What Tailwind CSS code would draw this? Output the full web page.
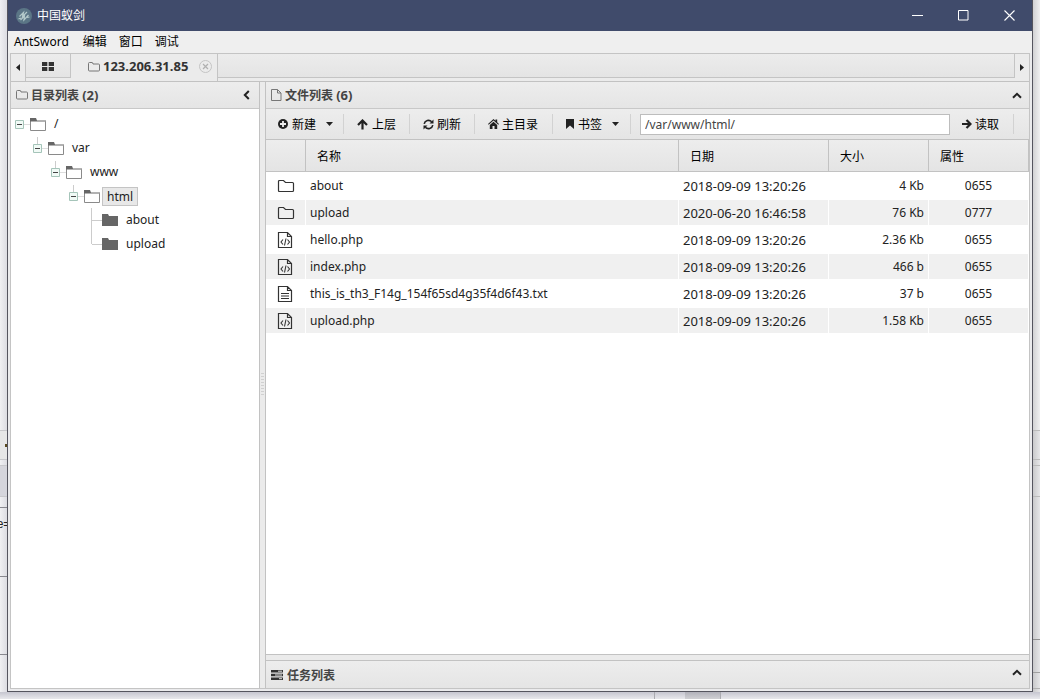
<!DOCTYPE html>
<html lang="zh-CN">
<head>
<meta charset="utf-8">
<title>中国蚁剑</title>
<script src="https://cdn.jsdelivr.net/npm/@tailwindcss/browser@4"></script>
</head>
<body class="h-screen overflow-hidden bg-[#e6e6ea] flex flex-col font-['Noto_Sans','Noto_Sans_CJK_SC',sans-serif] text-xs text-[#222]">
<svg class="hidden">
  <symbol id="folder-line" viewBox="0 0 18 14"><path d="M1.500 2.500q0-1 1-1h4l2 2h7q1 0 1 1v7q0 1-1 1h-13q-1 0-1-1z" fill="none" stroke="#333" stroke-width="1.200"/></symbol>
  <symbol id="folder-small" viewBox="0 0 12 10"><path d="M.5 1.500q0-1 1-1h2.500q1 0 1 1.500h5.500q1 0 1 1v5q0 1-1 1h-9q-1 0-1-1z" fill="none" stroke="#777"/></symbol>
  <symbol id="folder-open" viewBox="0 0 16 13"><path d="M.5 1.500v11h15v-9" fill="none" stroke="#8a8a8a"/><path d="M0 0h6l1 2.500h9v1h-16z" fill="#666"/></symbol>
  <symbol id="folder-full" viewBox="0 0 16 12"><path d="M0 0h6l1 2h9v10h-16z" fill="#666"/></symbol>
  <symbol id="file-code" viewBox="0 0 16 18"><path d="M1.500 1.500h9l4 4v11h-13zM10.500 1.500v4h4" fill="none" stroke="#333" stroke-width="1.200"/><path d="M6 8.500l-2 2.500 2 2.500M10.500 8.500l2 2.500-2 2.500M9 7.500l-1.500 7" fill="none" stroke="#333" stroke-width="1.100"/></symbol>
  <symbol id="file-text" viewBox="0 0 16 18"><path d="M1.500 1.500h9l4 4v11h-13zM10.500 1.500v4h4M4 8.500h8M4 11h8M4 13.500h8" fill="none" stroke="#333" stroke-width="1.200"/></symbol>
  <symbol id="minus-box" viewBox="0 0 9 9"><path d="M.5.5h8v8h-8z" fill="#f1faf6" stroke="#a5c4b9"/><path d="M2 4.500h5" stroke="#444"/></symbol>
  <symbol id="chev-up" viewBox="0 0 10 7"><path d="M1 5.800l4-4 4 4" fill="none" stroke="#222" stroke-width="2"/></symbol>
</svg>

<div class="flex flex-1 min-h-0">
  <div class="w-[7px] shrink-0 flex flex-col overflow-hidden bg-linear-to-r from-[#f0f0f3] to-[#dcdce2]">
    <div class="h-[430px]"></div>
    <div class="h-[30px] border-y border-[#c8c8cb] bg-[#e7e7e7] flex items-center justify-end"><i class="w-[2px] h-[3px] bg-[#5a4a20]"></i></div>
    <div class="h-[5px]"></div>
    <div class="h-8 border-y border-[#c8c8cc] bg-[#d5d5dc]"></div>
    <div class="h-[10px]"></div>
    <div class="h-[70px] border-y border-[#88888f] pt-2 flex justify-center leading-4 font-['Liberation_Sans',sans-serif] whitespace-nowrap">e=</div>
    <div class="h-[78px] border-b border-[#88888f]"></div>
  </div>

  <main class="flex-1 min-w-0 flex flex-col border-x border-b border-[#55555f] bg-[#ebebed]">
    <header class="h-[31px] shrink-0 bg-[#404b6b] text-white flex items-center pl-2">
      <svg class="size-4" viewBox="0 0 16 16"><circle cx="8" cy="8" r="8" fill="#5b7686"/><path d="M3.500 8.500l4-4-1 4 4.500-4.500M4.500 12l4-4-.5 4 4.500-5M2.500 11l2.500-1M11 9.500l2.500-.5" fill="none" stroke="#b4caca" stroke-width="1.200"/></svg>
      <h1 class="ml-[5px] flex-1">中国蚁剑</h1>
      <button aria-label="最小化" class="w-[46px] h-full flex items-center justify-center"><svg class="w-[11px] h-[11px]" viewBox="0 0 11 11"><path d="M0 5.500h11" stroke="#fff"/></svg></button>
      <button aria-label="最大化" class="w-[46px] h-full flex items-center justify-center"><svg class="w-[11px] h-[11px]" viewBox="0 0 11 11"><path d="M.5.5h9.500v9.500h-9.500z" fill="none" stroke="#fff"/></svg></button>
      <button aria-label="关闭" class="w-[46px] h-full flex items-center justify-center"><svg class="w-[11px] h-[11px]" viewBox="0 0 11 11"><path d="M.5.5l10 10M10.500.5l-10 10" stroke="#fff" stroke-width="1.100"/></svg></button>
    </header>
    <nav class="h-[22px] shrink-0 bg-[#efefef] flex items-center pl-1.5 gap-3 text-black">
      <button class="mr-[2px]">AntSword</button><button>编辑</button><button>窗口</button><button>调试</button>
    </nav>

    <div class="flex-1 min-h-0 flex flex-col mx-[2px] mb-[2px] border border-[#c4c4c4]">
      <div class="h-7 shrink-0 flex bg-[#ebebeb] border-b border-[#c2c2c2]">
        <button aria-label="向左" class="w-[15px] border-r border-[#c4c4c4] flex items-center justify-center"><svg class="w-1 h-[7px]" viewBox="0 0 4 7"><path d="M4 0v7l-4-3.500z" fill="#222"/></svg></button>
        <button aria-label="主页" class="w-[45px] h-6 pt-[2px] border-r border-b border-[#c4c4c4] bg-linear-to-b from-[#ececec] to-[#e4e4e4] flex items-center justify-center"><svg class="w-3 h-[9px]" viewBox="0 0 12 9"><path d="M0 0h5.300v4h-5.300zM6.700 0h5.300v4h-5.300zM0 5h5.300v4h-5.300zM6.700 5h5.300v4h-5.300z" fill="#333"/></svg></button>
        <div class="w-[147px] border-r border-[#c4c4c4] flex items-center pl-[17px] pb-[2px]">
          <svg class="w-3 h-[10px]"><use href="#folder-small"/></svg>
          <span class="ml-[3px] flex-1 text-[13px] font-bold text-[#333]">123.206.31.85</span>
          <button aria-label="关闭标签" class="mr-[5px]"><svg class="size-[13px]" viewBox="0 0 13 13"><circle cx="6.500" cy="6.500" r="6" fill="none" stroke="#c4c4c4"/><path d="M4 4l5 5M9 4l-5 5" stroke="#b0b0b0" stroke-width="1.200"/></svg></button>
        </div>
        <div class="flex-1 h-6 border-r border-b border-[#c4c4c4] bg-linear-to-b from-[#ececec] to-[#e4e4e4]"></div>
        <button aria-label="向右" class="w-[14px] flex items-center justify-center"><svg class="w-1 h-[7px]" viewBox="0 0 4 7"><path d="M0 0v7l4-3.500z" fill="#222"/></svg></button>
      </div>

      <div class="flex-1 min-h-0 flex">
        <section class="w-[249px] shrink-0 flex flex-col bg-white border-r border-[#c2c2c2]">
          <div class="h-[27px] shrink-0 flex items-center px-[5px] bg-linear-to-b from-[#ededed] to-[#e5e5e5] border-b border-[#c8c8c8]">
            <svg class="w-3 h-[10px]"><use href="#folder-small"/></svg>
            <h2 class="ml-[3px] pt-px flex-1 font-bold text-[#444]">目录列表 <span class="text-[13px]">(2)</span></h2>
            <button aria-label="折叠" class="mr-1"><svg class="w-[7px] h-[10px]" viewBox="0 0 7 10"><path d="M5.800 1l-4 4 4 4" fill="none" stroke="#222" stroke-width="2"/></svg></button>
          </div>
          <ul class="pt-[3px] pl-1 text-[#222]">
            <li class="h-6 flex items-center"><svg class="size-[9px]"><use href="#minus-box"/></svg><i class="w-[6px] border-t border-[#ddd]"></i><svg class="w-4 h-[13px]"><use href="#folder-open"/></svg><span class="ml-[3px] px-[5px]">/</span></li>
            <li class="h-6 flex items-center pl-[18px]"><span class="relative size-[9px]"><svg class="size-[9px]"><use href="#minus-box"/></svg><i class="absolute left-1 bottom-full w-px h-[7px] bg-[#ccc]"></i></span><i class="w-[6px] border-t border-[#ddd]"></i><svg class="w-4 h-[13px]"><use href="#folder-open"/></svg><span class="ml-[3px] px-[5px]">var</span></li>
            <li class="h-6 flex items-center pl-9"><span class="relative size-[9px]"><svg class="size-[9px]"><use href="#minus-box"/></svg><i class="absolute left-1 bottom-full w-px h-[7px] bg-[#ccc]"></i></span><i class="w-[6px] border-t border-[#ddd]"></i><svg class="w-4 h-[13px]"><use href="#folder-open"/></svg><span class="ml-[3px] px-[5px]">www</span></li>
            <li class="h-6 flex items-center pl-[54px]"><span class="relative size-[9px]"><svg class="size-[9px]"><use href="#minus-box"/></svg><i class="absolute left-1 bottom-full w-px h-[7px] bg-[#ccc]"></i></span><i class="w-[6px] border-t border-[#ddd]"></i><svg class="w-4 h-[13px]"><use href="#folder-open"/></svg><span class="ml-[2px] px-1 leading-[17px] border border-[#c4c4c4] bg-[#e8e8e8]">html</span></li>
            <li class="h-6 flex items-center pl-[76px]"><i class="w-px h-full bg-[#ccc]"></i><i class="w-[10px] border-t border-[#ccc]"></i><svg class="w-4 h-3"><use href="#folder-full"/></svg><span class="ml-[3px] px-[5px]">about</span></li>
            <li class="h-6 flex items-center pl-[76px]"><i class="w-px h-3 self-start bg-[#ccc]"></i><i class="w-[10px] border-t border-[#ccc]"></i><svg class="w-4 h-3"><use href="#folder-full"/></svg><span class="ml-[3px] px-[5px]">upload</span></li>
          </ul>
        </section>
        <div class="w-[5px] shrink-0 bg-[#ebebeb] flex items-center justify-center"><i class="w-[3px] h-6 bg-[repeating-linear-gradient(#d0d0d0_0_1px,#ebebeb_1px_3px)]"></i></div>
        <section class="flex-1 min-w-0 flex flex-col bg-[#ebebeb] border-l border-[#c2c2c2]">
          <div class="h-[27px] shrink-0 flex items-center px-[5px] bg-linear-to-b from-[#ededed] to-[#e5e5e5] border-b border-[#c8c8c8]">
            <svg class="w-[11px] h-3" viewBox="0 0 11 12"><path d="M.5.5h6l3.500 3.500v7.500h-9.500zM6.500 .5v3.500h3.500" fill="none" stroke="#777"/></svg>
            <h2 class="ml-[3px] pt-px flex-1 font-bold text-[#444]">文件列表 <span class="text-[13px]">(6)</span></h2>
            <button aria-label="收起" class="mr-[2px]"><svg class="w-[10px] h-[7px]"><use href="#chev-up"/></svg></button>
          </div>
          <div class="h-[31px] shrink-0 flex items-center bg-linear-to-b from-[#ededed] to-[#e5e5e5] border-b border-[#c2c2c2] text-black [&_span]:pt-px">
            <button class="w-[78px] h-5 pl-3 flex items-center border-r border-[#d2d2d2]"><svg class="size-[10px]" viewBox="0 0 10 10"><circle cx="5" cy="5" r="5" fill="#222"/><path d="M5 2v6M2 5h6" stroke="#eee" stroke-width="1.800"/></svg><span class="ml-1">新建</span><svg class="ml-[10px] w-[7px] h-1" viewBox="0 0 7 4"><path d="M0 0h7l-3.500 4z" fill="#222"/></svg></button>
            <button class="w-[66px] h-5 pl-[13px] flex items-center border-r border-[#d2d2d2]"><svg class="w-[11px] h-[11px]" viewBox="0 0 11 11"><path d="M5.500 10.500v-8M1 6l4.500-4.500 4.500 4.500" fill="none" stroke="#222" stroke-width="2.200"/></svg><span class="ml-1">上层</span></button>
            <button class="w-[65px] h-5 pl-[13px] flex items-center border-r border-[#d2d2d2]"><svg class="w-[11px] h-[11px]" viewBox="0 0 11 11"><path d="M1.200 4.800a4.300 4 0 0 1 7.500-2M9.800 6.200a4.300 4 0 0 1-7.500 2" fill="none" stroke="#222" stroke-width="1.600"/><path d="M10.500.5v4h-4zM.5 10.500v-4h4z" fill="#222"/></svg><span class="ml-[3px]">刷新</span></button>
            <button class="w-[78px] h-5 pl-[13px] flex items-center border-r border-[#d2d2d2]"><svg class="w-[11px] h-[10px]" viewBox="0 0 11 10"><path d="M0 5l5.500-5 2 1.800v-1.300h1.700v2.800l1.800 1.700-.7.700-4.800-4.300-4.800 4.300zM1.800 6l3.700-3.300 3.700 3.300v4h-2.700v-3h-2v3h-2.700z" fill="#222"/></svg><span class="ml-[3px]">主目录</span></button>
            <button class="w-[78px] h-5 pl-[13px] flex items-center border-r border-[#d2d2d2]"><svg class="w-2 h-[10px]" viewBox="0 0 8 10"><path d="M0 0h8v10l-4-3.500-4 3.500z" fill="#222"/></svg><span class="ml-1">书签</span><svg class="ml-[10px] w-[7px] h-1" viewBox="0 0 7 4"><path d="M0 0h7l-3.500 4z" fill="#222"/></svg></button>
            <input aria-label="路径" value="/var/www/html/" class="ml-[9px] flex-1 min-w-0 h-[21px] px-1 bg-white border border-[#bdbdbd] text-[#444]">
            <button class="w-16 h-5 mr-[15px] pl-3 flex items-center border-r border-[#d2d2d2]"><svg class="w-[10px] h-[10px]" viewBox="0 0 10 10"><path d="M0 5h8M4.500 1l4 4-4 4" fill="none" stroke="#222" stroke-width="2.200"/></svg><span class="ml-[3px]">读取</span></button>
          </div>
          <div class="flex-1 min-h-0 bg-white border-b border-[#c2c2c2]">
            <table class="w-full table-fixed border-separate border-spacing-0 text-left">
              <colgroup><col class="w-10"><col><col class="w-[150px]"><col class="w-[100px]"><col class="w-[100px]"></colgroup>
              <thead class="bg-linear-to-b from-[#ededed] to-[#e4e4e4] text-black">
                <tr class="h-8 [&_th]:font-normal [&_th]:pt-[2px] [&_th]:pl-[11px] [&_th]:border-r [&_th]:border-b [&_th]:border-[#c2c2c2]"><th aria-label="类型"></th><th>名称</th><th>日期</th><th>大小</th><th>属性</th></tr>
              </thead>
              <tbody class="[&_td]:border-r [&_td]:border-y [&_td]:border-white [&_td]:px-1 [&_tr]:h-[27px] [&_tr:nth-child(even)]:bg-[#f0f0f0] [&_td:nth-child(3)]:text-[13px] [&_td:nth-child(3)]:leading-4 [&_td:nth-child(4)]:text-right [&_td:nth-child(5)]:text-center [&_svg]:ml-[7px]">
                <tr><td><svg class="w-[18px] h-[14px]"><use href="#folder-line"/></svg></td><td>about</td><td>2018-09-09 13:20:26</td><td>4 Kb</td><td>0655</td></tr>
                <tr><td><svg class="w-[18px] h-[14px]"><use href="#folder-line"/></svg></td><td>upload</td><td>2020-06-20 16:46:58</td><td>76 Kb</td><td>0777</td></tr>
                <tr><td><svg class="w-4 h-[18px]"><use href="#file-code"/></svg></td><td>hello.php</td><td>2018-09-09 13:20:26</td><td>2.36 Kb</td><td>0655</td></tr>
                <tr><td><svg class="w-4 h-[18px]"><use href="#file-code"/></svg></td><td>index.php</td><td>2018-09-09 13:20:26</td><td>466 b</td><td>0655</td></tr>
                <tr><td><svg class="w-4 h-[18px]"><use href="#file-text"/></svg></td><td>this_is_th3_F14g_154f65sd4g35f4d6f43.txt</td><td>2018-09-09 13:20:26</td><td>37 b</td><td>0655</td></tr>
                <tr><td><svg class="w-4 h-[18px]"><use href="#file-code"/></svg></td><td>upload.php</td><td>2018-09-09 13:20:26</td><td>1.58 Kb</td><td>0655</td></tr>
              </tbody>
            </table>
          </div>
          <div class="mt-[5px] h-7 shrink-0 flex items-center px-[5px] bg-linear-to-b from-[#ededed] to-[#e5e5e5] border-t border-[#c2c2c2]">
            <svg class="w-3 h-[10px]" viewBox="0 0 12 10"><path d="M0 0h12v2.500h-12zM0 3.700h12v2.500h-12zM0 7.400h12v2.500h-12z" fill="#333"/><path d="M7 1.200h4M4 5h7M8 8.700h3" stroke="#ddd"/></svg>
            <h2 class="ml-1 pt-[2px] flex-1 font-bold text-[#444]">任务列表</h2>
            <button aria-label="展开" class="mr-[2px] pb-1"><svg class="w-[10px] h-[7px]"><use href="#chev-up"/></svg></button>
          </div>
        </section>
      </div>
    </div>
  </main>

  <div class="w-[7px] shrink-0 flex flex-col bg-linear-to-r from-[#c9c9cb] to-[#e6e6e8]">
    <div class="h-[430px] bg-linear-to-r from-[#d2d2d4] to-[#f0f0f1]"></div>
    <div class="h-[30px] border-y border-[#bababa]"></div>
    <div class="h-[5px]"></div>
    <div class="h-8 border-y border-[#bababa]"></div>
    <div class="h-[143px] border-b border-[#909090]"></div>
    <div class="h-[33px] border-b border-[#a0a0a0]"></div>
    <div class="h-4 border-b border-[#b0b0b0]"></div>
  </div>
</div>
<div class="h-[7px] shrink-0 flex bg-linear-to-b from-[#c6c6d0] to-[#e8e8ec]">
  <div class="w-[655px] border-r border-[#aaaab0]"></div><div class="w-[30px]"></div><div class="w-9 bg-black/10 border-r border-[#aaaab0]"></div>
</div>
</body>
</html>
